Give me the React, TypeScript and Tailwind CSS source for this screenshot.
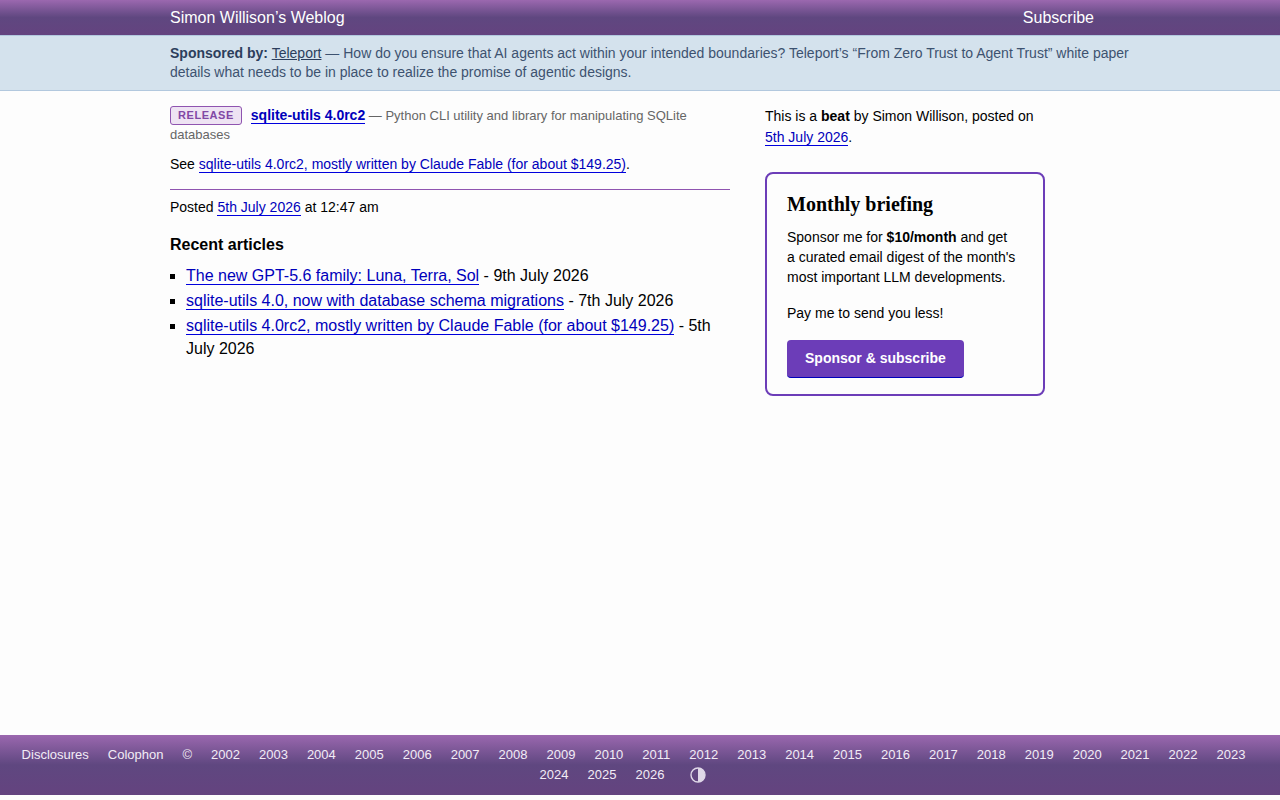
import type { ReactNode } from "react";

const articles = [
  { title: "The new GPT-5.6 family: Luna, Terra, Sol", date: "9th July 2026" },
  { title: "sqlite-utils 4.0, now with database schema migrations", date: "7th July 2026" },
  { title: "sqlite-utils 4.0rc2, mostly written by Claude Fable (for about $149.25)", date: "5th July 2026" },
];

const years = Array.from({ length: 25 }, (_, i) => 2002 + i);

const TextLink = ({ children }: { children: ReactNode }) => (
  <a href="#" className="border-b border-[#0000dd] text-[#0000bb]">
    {children}
  </a>
);

const Header = () => (
  <header className="border-b border-[#b2c8de] bg-linear-to-b from-[#9b68af] via-[#5f4780] to-[#64437f] text-white">
    <div className="mx-auto flex h-[35px] max-w-[940px] items-center justify-between pr-4">
      <a href="#">Simon Willison’s Weblog</a>
      <a href="#">Subscribe</a>
    </div>
  </header>
);

const SponsorBanner = () => (
  <div className="border-b border-[#b2c8de] bg-[#d4e2ed] py-2 text-sm leading-[19px] text-[#3d5270]">
    <div className="mx-auto max-w-[940px]">
      <p className="-mr-6">
        <strong className="text-[#2c3e5c]">Sponsored by:</strong>{" "}
        <a href="#" className="text-[#2c3e5c] underline">Teleport</a> — How do you ensure that AI agents act within
        your intended boundaries? Teleport’s “From Zero Trust to Agent Trust” white paper details what needs to be in
        place to realize the promise of agentic designs.
      </p>
    </div>
  </div>
);

const Entry = () => (
  <article className="text-sm">
    <div className="leading-[19px]">
      <span className="mr-[9px] inline-block rounded-[3px] border border-[#8f54b0] bg-[#eee3f3] px-[7px] align-top text-[11px] leading-[17px] font-bold tracking-wider text-[#8148a5]">
        RELEASE
      </span>
      <strong>
        <TextLink>sqlite-utils 4.0rc2</TextLink>
      </strong>
      <span className="text-[13px] text-[#666666]"> — Python CLI utility and library for manipulating SQLite databases</span>
    </div>
    <p className="mt-[10px] leading-5">
      See <TextLink>{articles[2].title}</TextLink>.
    </p>
    <div className="mt-[15px] border-t border-[#8f54b0] pt-[7px] leading-5">
      Posted <TextLink>5th July 2026</TextLink> at 12:47 am
    </div>
  </article>
);

const RecentArticles = () => (
  <section className="mt-4">
    <h2 className="leading-6 font-bold">Recent articles</h2>
    <ul className="mt-[7px] flex flex-col gap-[2px] leading-[23px]">
      {articles.map((article) => (
        <li key={article.title} className="flex gap-[11px]">
          <span className="mt-[10px] size-[5px] shrink-0 bg-black" />
          <span>
            <TextLink>{article.title}</TextLink> - {article.date}
          </span>
        </li>
      ))}
    </ul>
  </section>
);

const Sidebar = () => (
  <aside className="w-[280px] shrink-0 text-sm">
    <p className="leading-[21px]">
      This is a <strong>beat</strong> by Simon Willison, posted on <TextLink>5th July 2026</TextLink>.
    </p>
    <section className="mt-6 rounded-lg border-2 border-[#6c3db8] px-5 py-4 leading-5">
      <h2 className="font-['Liberation_Serif',serif] text-xl leading-7 font-bold">Monthly briefing</h2>
      <p className="mt-[9px]">
        Sponsor me for <strong>$10/month</strong> and get
        <br />a curated email digest of the month's most important LLM developments.
      </p>
      <p className="mt-4">Pay me to send you less!</p>
      <a
        href="#"
        className="mt-[17px] inline-block rounded border-b border-[#0000bb] bg-[#6c3db8] px-[18px] pt-2 pb-[9px] align-top font-bold text-white"
      >
        Sponsor &amp; subscribe
      </a>
    </section>
  </aside>
);

const ThemeIcon = () => (
  <svg viewBox="0 0 16 16" className="size-4" aria-hidden="true">
    <circle cx="8" cy="8" r="7" fill="none" stroke="currentColor" strokeWidth="1.4" />
    <path d="M8 1a7 7 0 0 1 0 14z" fill="currentColor" />
  </svg>
);

const Footer = () => (
  <footer className="bg-linear-to-b from-[#9b68af] via-[#5f4780] to-[#64437f] py-[10px] pl-[6px] text-[13px] leading-5 text-[#f2ecf6]">
    <ul className="flex flex-wrap justify-center">
      <li className="mr-[19px]"><a href="#">Disclosures</a></li>
      <li className="mr-[19px]"><a href="#">Colophon</a></li>
      <li className="mr-[19px]">©</li>
      {years.map((year) => (
        <li key={year} className="mr-[19px]">
          <a href="#">{year}</a>
        </li>
      ))}
      <li className="mr-10 ml-[7px] flex items-center">
        <button type="button" aria-label="Toggle theme" className="text-[#e0d8e8]">
          <ThemeIcon />
        </button>
      </li>
    </ul>
  </footer>
);

const App = () => (
  <div className="flex min-h-screen flex-col bg-[#fdfdfd] pb-[5px] font-['Liberation_Sans',Arial,sans-serif] text-base text-black">
    <Header />
    <SponsorBanner />
    <div className="mx-auto flex w-full max-w-[940px] grow gap-[35px] pt-[15px] pb-8">
      <main className="w-[560px]">
        <Entry />
        <RecentArticles />
      </main>
      <Sidebar />
    </div>
    <Footer />
  </div>
);

export default App;
